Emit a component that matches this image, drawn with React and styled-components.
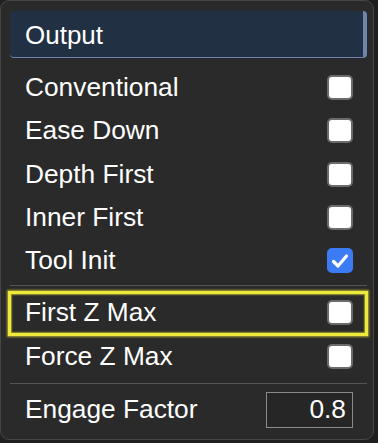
import React, { useState } from "react";
import styled, { createGlobalStyle, css } from "styled-components";

const GlobalStyle = createGlobalStyle`
  html, body {
    margin: 0;
    padding: 0;
    background: #1f1f1f;
  }
  body {
    font-family: "Liberation Sans", Arial, Helvetica, sans-serif;
    color: #ffffff;
  }
`;

const Panel = styled.div`
  width: 374px;
  height: 440px;
  box-sizing: border-box;
  background: #2a2a2a;
  border: 1px solid #464646;
  border-radius: 9px;
  display: flex;
  flex-direction: column;
`;

const Header = styled.div`
  margin: 10px 6px 0 9px;
  height: 47px;
  box-sizing: border-box;
  background: #223044;
  border-bottom: 1px solid #6f84ab;
  border-right: 4px solid #7085ad;
  border-radius: 4px;
  display: flex;
  align-items: center;
  padding-left: 15px;
  padding-top: 3px;
  font-size: 26px;
`;

const Group = styled.div`
  display: flex;
  flex-direction: column;
  padding-top: ${(p) => p.$top || 0}px;
`;

const Row = styled.label`
  position: relative;
  height: 43.25px;
  display: flex;
  align-items: center;
  justify-content: space-between;
  padding: 0 20px 0 24px;
  font-size: 26.3px;
  cursor: pointer;

  ${(p) =>
    p.$marked &&
    css`
      &::after {
        content: "";
        position: absolute;
        left: 7px;
        right: 5px;
        top: 0px;
        bottom: -1px;
        border: 3.5px solid #eeea3c;
        box-shadow: 0 0 2px 1px rgba(230, 225, 60, 0.7),
          inset 0 0 1.5px 1px rgba(230, 225, 60, 0.6);
        pointer-events: none;
      }
    `}
`;

const Box = styled.span`
  width: 26px;
  height: 25px;
  box-sizing: border-box;
  border-radius: 5px;
  display: flex;
  align-items: center;
  justify-content: center;
  background: ${(p) => (p.$on ? "#3b7cf4" : "#ffffff")};
  border: 2px solid ${(p) => (p.$on ? "#3b7cf4" : "#6b6b6b")};
`;

const Divider = styled.div`
  height: 1px;
  background: #555555;
  margin: ${(p) => p.$top}px 6px 0 9px;
`;

const FieldRow = styled.div`
  height: 44px;
  margin-top: 4px;
  display: flex;
  align-items: center;
  justify-content: space-between;
  padding: 0 20px 0 24px;
  font-size: 26.3px;
`;

const NumberBox = styled.div`
  width: 87px;
  height: 36px;
  box-sizing: border-box;
  border: 1px solid #8a8a8a;
  background: #262626;
  display: flex;
  align-items: center;
  justify-content: flex-end;
  padding-right: 6px;
  font-size: 26.3px;
`;

function Check({ on }) {
  return (
    <Box $on={on}>
      {on && (
        <svg width="18" height="16" viewBox="0 0 18 16">
          <path
            d="M2.5 8.5 L7 13 L15.5 3"
            fill="none"
            stroke="#fff"
            strokeWidth="3.2"
            strokeLinecap="round"
            strokeLinejoin="round"
          />
        </svg>
      )}
    </Box>
  );
}

const firstGroup = [
  { label: "Conventional", on: false },
  { label: "Ease Down", on: false },
  { label: "Depth First", on: false },
  { label: "Inner First", on: false },
  { label: "Tool Init", on: true },
];

const secondGroup = [
  { label: "First Z Max", on: false, marked: true },
  { label: "Force Z Max", on: false },
];

export default function App() {
  const [engage] = useState("0.8");
  return (
    <>
      <GlobalStyle />
      <Panel>
        <Header>Output</Header>
        <Group $top={8}>
          {firstGroup.map((r) => (
            <Row key={r.label}>
              <span>{r.label}</span>
              <Check on={r.on} />
            </Row>
          ))}
        </Group>
        <Divider $top={3} />
        <Group $top={5}>
          {secondGroup.map((r) => (
            <Row key={r.label} $marked={r.marked}>
              <span>{r.label}</span>
              <Check on={r.on} />
            </Row>
          ))}
        </Group>
        <Divider $top={5} />
        <FieldRow>
          <span>Engage Factor</span>
          <NumberBox>{engage}</NumberBox>
        </FieldRow>
      </Panel>
    </>
  );
}
